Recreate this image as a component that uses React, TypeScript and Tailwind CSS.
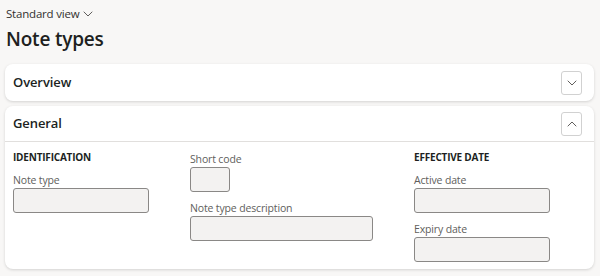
import React from "react";

function Chevron({ up }: { up?: boolean }) {
  return (
    <svg width="10" height="6" viewBox="0 0 10 6" fill="none" className={up ? "rotate-180" : ""}>
      <path d="M1 1l4 4 4-4" stroke="#605e5c" strokeWidth="1" strokeLinecap="round" strokeLinejoin="round" />
    </svg>
  );
}

function Field({ label, width }: { label: string; width: string }) {
  return (
    <div className="flex flex-col">
      <div className="h-4 text-[10.5px] leading-4 tracking-[-0.15px] text-[#605e5c]">{label}</div>
      <div className={`${width} h-[25px] rounded-[3px] border border-[#8a8886] bg-[#f3f2f1]`} />
    </div>
  );
}

export default function App() {
  return (
    <div
      className="w-[600px] h-[276px] bg-[#f8f7f6] text-[#323130] overflow-hidden"
      style={{ fontFamily: '"Open Sans", "Noto Sans", sans-serif' }}
    >
      <div className="px-[6px] pt-[5px]">
        <div className="flex items-center gap-[4px] text-[11.5px] leading-[18px] tracking-[-0.2px] text-[#323130]">
          Standard view
          <Chevron />
        </div>
        <h1 className="text-[19px] font-semibold leading-[26px] tracking-[-0.2px] text-[#201f1e] mt-[3px]">Note types</h1>
      </div>

      <div className="px-[5px] pr-[6px] mt-[12px] flex flex-col gap-[5px]">
        <div className="h-[37px] rounded-lg bg-white shadow-[0_1px_3px_rgba(0,0,0,0.15)] flex items-center justify-between pl-2 pr-[12px]">
          <span className="text-[13px] font-semibold tracking-[-0.1px] text-[#201f1e]">Overview</span>
          <button className="w-[21px] h-[24px] rounded-[3px] border border-[#d1d1d1] bg-white flex items-center justify-center">
            <Chevron />
          </button>
        </div>

        <div className="rounded-lg bg-white shadow-[0_1px_3px_rgba(0,0,0,0.15)]">
          <div className="h-[36px] flex items-center justify-between pl-2 pr-[12px] border-b border-[#e1dfdd]">
            <span className="text-[13px] font-semibold tracking-[-0.1px] text-[#201f1e]">General</span>
            <button className="w-[21px] h-[24px] rounded-[3px] border border-[#d1d1d1] bg-white flex items-center justify-center">
              <Chevron up />
            </button>
          </div>
          <div className="flex gap-[41px] pl-2 pt-[8px] h-[127px]">
            <div className="w-[136px] flex flex-col">
              <div className="h-[14px] text-[10px] leading-[14px] font-bold tracking-[-0.2px] text-[#201f1e] mb-[8px]">IDENTIFICATION</div>
              <Field label="Note type" width="w-[136px]" />
            </div>
            <div className="w-[183px] flex flex-col gap-[8px] pt-[1px]">
              <Field label="Short code" width="w-[40px]" />
              <Field label="Note type description" width="w-[183px]" />
            </div>
            <div className="w-[136px] flex flex-col">
              <div className="h-[14px] text-[10px] leading-[14px] font-bold tracking-[-0.2px] text-[#201f1e] mb-[8px]">EFFECTIVE DATE</div>
              <div className="flex flex-col gap-[8px]">
                <Field label="Active date" width="w-[136px]" />
                <Field label="Expiry date" width="w-[136px]" />
              </div>
            </div>
          </div>
        </div>
      </div>
    </div>
  );
}
